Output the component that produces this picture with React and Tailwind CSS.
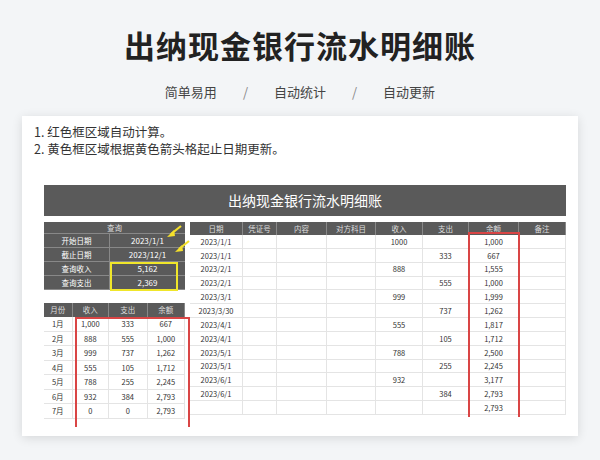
const right = [
  ["2023/1/1","","","","1000","","1,000"],
  ["2023/1/1","","","","","333","667"],
  ["2023/2/1","","","","888","","1,555"],
  ["2023/2/1","","","","","555","1,000"],
  ["2023/3/1","","","","999","","1,999"],
  ["2023/3/30","","","","","737","1,262"],
  ["2023/4/1","","","","555","","1,817"],
  ["2023/4/1","","","","","105","1,712"],
  ["2023/5/1","","","","788","","2,500"],
  ["2023/5/1","","","","","255","2,245"],
  ["2023/6/1","","","","932","","3,177"],
  ["2023/6/1","","","","","384","2,793"],
  ["","","","","","","2,793"],
];
const months = [
  ["1月","1,000","333","667"],["2月","888","555","1,000"],["3月","999","737","1,262"],
  ["4月","555","105","1,712"],["5月","788","255","2,245"],["6月","932","384","2,793"],["7月","0","0","2,793"],
];
const rw = [53,34,50,49,47,46,50,47];
const mw = [29,37,39,38];
const F = { fontFamily: '"Noto Sans CJK SC","Noto Sans",sans-serif' };

function Arrow({className}) {
  return (
    <svg className={className} width="16" height="14" viewBox="0 0 16 14">
      <path d="M15 1 L5 9" stroke="#f5e02a" strokeWidth="2.2" />
      <path d="M1 12 L8 5 L9 11 Z" fill="#f5e02a" />
    </svg>
  );
}

export default function App() {
  return (
    <div className="w-[600px] h-[460px] bg-[#f3f5f7] overflow-hidden flex flex-col items-center" style={F}>
      <div className="mt-[24px] text-[31px] font-bold text-[#222] leading-[42px] tracking-[1px]">出纳现金银行流水明细账</div>
      <div className="mt-[17px] flex gap-[26px] text-[13px] text-[#444] leading-[18px]">
        <span>简单易用</span><span className="text-[#888]">/</span><span>自动统计</span><span className="text-[#888]">/</span><span>自动更新</span>
      </div>
      <div className="mt-[15px] w-[556px] h-[320px] bg-white shadow-[0_2px_10px_rgba(0,0,0,0.12)] px-[12px] pt-[7px] flex flex-col">
        <div className="text-[12.5px] text-[#333] leading-[17px]">1. 红色框区域自动计算。</div>
        <div className="text-[12.5px] text-[#333] leading-[17px]">2. 黄色框区域根据黄色箭头格起止日期更新。</div>
        <div className="mt-[28px] ml-[10px] w-[522px] h-[31px] bg-[#5a5a5a] text-white text-[14px] flex items-center justify-center">出纳现金银行流水明细账</div>
        <div className="ml-[10px] mt-[6px] flex gap-[5px] text-[7.5px]">
          <div className="w-[141px] flex flex-col">
            <div className="relative">
              <div className="h-[12px] bg-[#5a5a5a] text-[#ddd] flex items-center justify-center border-b border-[#888]">查询</div>
              {[["开始日期","2023/1/1"],["截止日期","2023/12/1"],["查询收入","5,162"],["查询支出","2,369"]].map((r,i)=>(
                <div key={i} className="h-[14px] flex bg-[#5a5a5a] text-white border-b border-[#888]">
                  <div className="w-[66px] flex items-center justify-center border-r border-[#888]">{r[0]}</div>
                  <div className="flex-1 flex items-center justify-center text-[8px]">{r[1]}</div>
                </div>
              ))}
              <div className="absolute left-[66px] top-[40px] w-[68px] h-[29px] border-2 border-[#f0e62a]"></div>
              <Arrow className="absolute left-[122px] top-[3px]" />
              <Arrow className="absolute left-[130px] top-[18px]" />
            </div>
            <div className="mt-[13px] relative">
              <div className="h-[14px] flex bg-[#5a5a5a] text-[#ddd]">
                {["月份","收入","支出","余额"].map((h,i)=>(
                  <div key={i} style={{width:mw[i]}} className="flex items-center justify-center border-r border-[#888]">{h}</div>
                ))}
              </div>
              {months.map((r,ri)=>(
                <div key={ri} className="h-[14.5px] flex text-[#333] border-b border-[#e4e4e4]">
                  {r.map((c,i)=>(
                    <div key={i} style={{width:mw[i]}} className="flex items-center justify-center border-r border-[#e4e4e4]">{c}</div>
                  ))}
                </div>
              ))}
              <div className="absolute left-[31px] top-[14px] w-[115px] h-[110px] border-2 border-[#d94545] border-b-0"></div>
            </div>
          </div>
          <div className="w-[376px] relative">
            <div className="h-[13px] flex bg-[#5a5a5a] text-[#ddd]">
              {["日期","凭证号","内容","对方科目","收入","支出","余额","备注"].map((h,i)=>(
                <div key={i} style={{width:rw[i]}} className="flex items-center justify-center border-r border-[#888]">{h}</div>
              ))}
            </div>
            {right.map((r,ri)=>(
              <div key={ri} className="h-[13.85px] flex text-[#333] border-b border-[#e4e4e4]">
                {[...r,""].map((c,i)=>(
                  <div key={i} style={{width:rw[i]}} className="flex items-center justify-center border-r border-[#e4e4e4]">{c}</div>
                ))}
              </div>
            ))}
            <div className="absolute left-[278px] top-[10px] w-[52px] h-[185px] border-2 border-b-0 border-[#d94545]"></div>
          </div>
        </div>
      </div>
    </div>
  );
}
